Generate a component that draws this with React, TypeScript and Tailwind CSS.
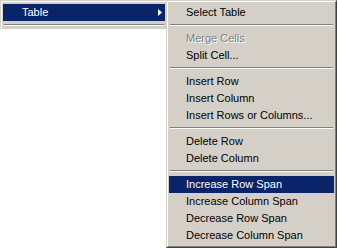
const font = { fontFamily: '"Liberation Sans", Tahoma, sans-serif' };

type Entry = { label: string; disabled?: boolean; active?: boolean } | 'sep';

const items: Entry[] = [
  { label: 'Select Table' },
  'sep',
  { label: 'Merge Cells', disabled: true },
  { label: 'Split Cell...' },
  'sep',
  { label: 'Insert Row' },
  { label: 'Insert Column' },
  { label: 'Insert Rows or Columns...' },
  'sep',
  { label: 'Delete Row' },
  { label: 'Delete Column' },
  'sep',
  { label: 'Increase Row Span', active: true },
  { label: 'Increase Column Span' },
  { label: 'Decrease Row Span' },
  { label: 'Decrease Column Span' },
];

const Separator = () => (
  <div className="h-[9px] pt-[3px] px-px">
    <div className="h-px bg-[#808080]" />
    <div className="h-px bg-white" />
  </div>
);

export default function App() {
  return (
    <div className="w-[338px] h-[251px] bg-white flex items-start text-[11px] leading-[17px]" style={font}>
      {/* parent menu */}
      <div className="w-[166px] h-[29px] border-l border-t border-[#d4d0c8] bg-[#d4d0c8]">
        <div className="h-full border-l border-t border-white px-px pt-[2px]">
          <div className="h-[17px] bg-[#0a246a] text-white flex items-center justify-between pl-[19px] pr-[3px]">
            <span>Table</span>
            <svg width="4" height="7" viewBox="0 0 4 7">
              <polygon points="0,0 4,3.5 0,7" fill="#fff" />
            </svg>
          </div>
          <Separator />
        </div>
      </div>

      {/* submenu */}
      <div className="w-[171px] border border-[#d4d0c8] border-r-[#404040] border-b-[#404040] bg-[#d4d0c8]">
        <div className="border border-white border-r-[#808080] border-b-[#808080] px-px py-[2px]">
          {items.map((it, i) =>
            it === 'sep' ? (
              <Separator key={i} />
            ) : (
              <div
                key={i}
                className={`h-[17px] pl-[17px] whitespace-nowrap ${
                  it.active ? 'bg-[#0a246a] text-white' : it.disabled ? 'text-[#808080]' : 'text-black'
                }`}
                style={it.disabled ? { textShadow: '1px 1px 0 #fff' } : undefined}
              >
                {it.label}
              </div>
            )
          )}
        </div>
      </div>
    </div>
  );
}
